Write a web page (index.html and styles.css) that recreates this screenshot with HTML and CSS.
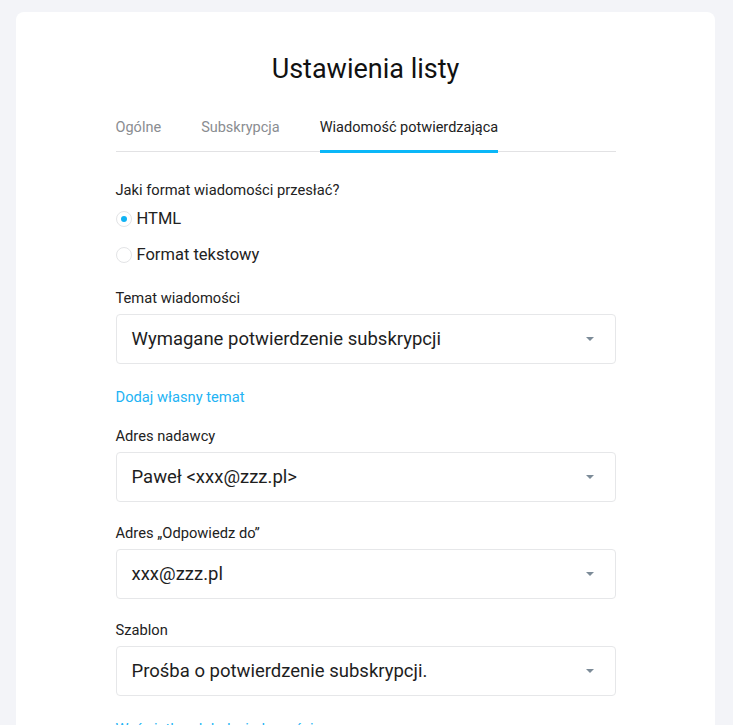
FILE: index.html
```html
<!DOCTYPE html>
<html lang="pl">
<head>
<meta charset="utf-8">
<title>Ustawienia listy</title>
<link rel="stylesheet" href="styles.css">
</head>
<body>
<div class="card">
  <div class="content">
    <h1 class="title">Ustawienia listy</h1>
    <div class="tabs">
      <div class="tab">Ogólne</div>
      <div class="tab">Subskrypcja</div>
      <div class="tab active">Wiadomość potwierdzająca</div>
    </div>

    <div class="question">Jaki format wiadomości przesłać?</div>
    <div class="radio-row">
      <span class="radio checked"></span><span class="radio-text">HTML</span>
    </div>
    <div class="radio-row second">
      <span class="radio"></span><span class="radio-text">Format tekstowy</span>
    </div>

    <div class="label first">Temat wiadomości</div>
    <div class="select"><span>Wymagane potwierdzenie subskrypcji</span><span class="arrow"></span></div>

    <a class="link first-link" href="#">Dodaj własny temat</a>

    <div class="label after-link">Adres nadawcy</div>
    <div class="select"><span>Paweł &lt;xxx@zzz.pl&gt;</span><span class="arrow"></span></div>

    <div class="label">Adres „Odpowiedz do”</div>
    <div class="select"><span>xxx@zzz.pl</span><span class="arrow"></span></div>

    <div class="label">Szablon</div>
    <div class="select"><span>Prośba o potwierdzenie subskrypcji.</span><span class="arrow"></span></div>

    <a class="link last-link" href="#">Wyświetl podgląd wiadomości</a>
  </div>
</div>
</body>
</html>
```

FILE: styles.css
```css
* { box-sizing: border-box; }
html, body { margin: 0; padding: 0; }
body {
  background: #f3f4f8;
  font-family: Roboto, "Liberation Sans", Arial, sans-serif;
  color: #222;
  height: 725px;
  overflow: hidden;
}
.card {
  margin: 12px 18px 0 16px;
  background: #fff;
  border-radius: 8px;
  padding: 41px 0 60px;
  min-height: 760px;
}
.content {
  width: 500px;
  margin: 0 auto;
  display: flex;
  flex-direction: column;
  align-items: stretch;
}
.title {
  margin: 0;
  text-align: center;
  font-weight: 400;
  font-size: 27px;
  line-height: 32px;
  color: #111;
}
.tabs {
  margin-top: 33px;
  display: flex;
  gap: 40px;
  border-bottom: 1px solid #e2e2e4;
}
.tab {
  position: relative;
  font-size: 14.5px;
  line-height: 20px;
  padding-bottom: 13px;
  color: #8a8d91;
}
.tab.active { color: #222; }
.tab.active::after {
  content: "";
  position: absolute;
  left: 0; right: 0;
  bottom: -2px;
  height: 3px;
  background: #0bb7f8;
}
.question {
  margin-top: 28px;
  font-size: 14.7px;
  line-height: 20px;
}
.radio-row {
  margin-top: 7px;
  display: flex;
  align-items: center;
  height: 24px;
  gap: 5px;
}
.radio-row.second { margin-top: 12px; }
.radio {
  width: 16px;
  height: 16px;
  border-radius: 50%;
  border: 1px solid #e3e4e6;
  display: flex;
  align-items: center;
  justify-content: center;
  flex: none;
}
.radio.checked::after {
  content: "";
  width: 6px;
  height: 6px;
  border-radius: 50%;
  background: #10b3f4;
}
.radio-text {
  font-size: 16.5px;
  line-height: 24px;
}
.label {
  margin-top: 21px;
  font-size: 14.7px;
  line-height: 20px;
  margin-bottom: 6px;
}
.label.first { margin-top: 21px; }
.label.after-link { margin-top: 19px; }
.select {
  height: 50px;
  border: 1px solid #e6e7e9;
  border-radius: 4px;
  display: flex;
  align-items: center;
  justify-content: space-between;
  padding: 0 21px 0 15px;
  font-size: 18.5px;
  color: #1e1e1e;
}
.arrow {
  width: 0;
  height: 0;
  border-left: 4.5px solid transparent;
  border-right: 4.5px solid transparent;
  border-top: 4px solid #7c8b98;
}
.link {
  margin-top: 23px;
  font-size: 14.7px;
  line-height: 20px;
  color: #22b3f4;
  text-decoration: none;
  align-self: flex-start;
}
```
